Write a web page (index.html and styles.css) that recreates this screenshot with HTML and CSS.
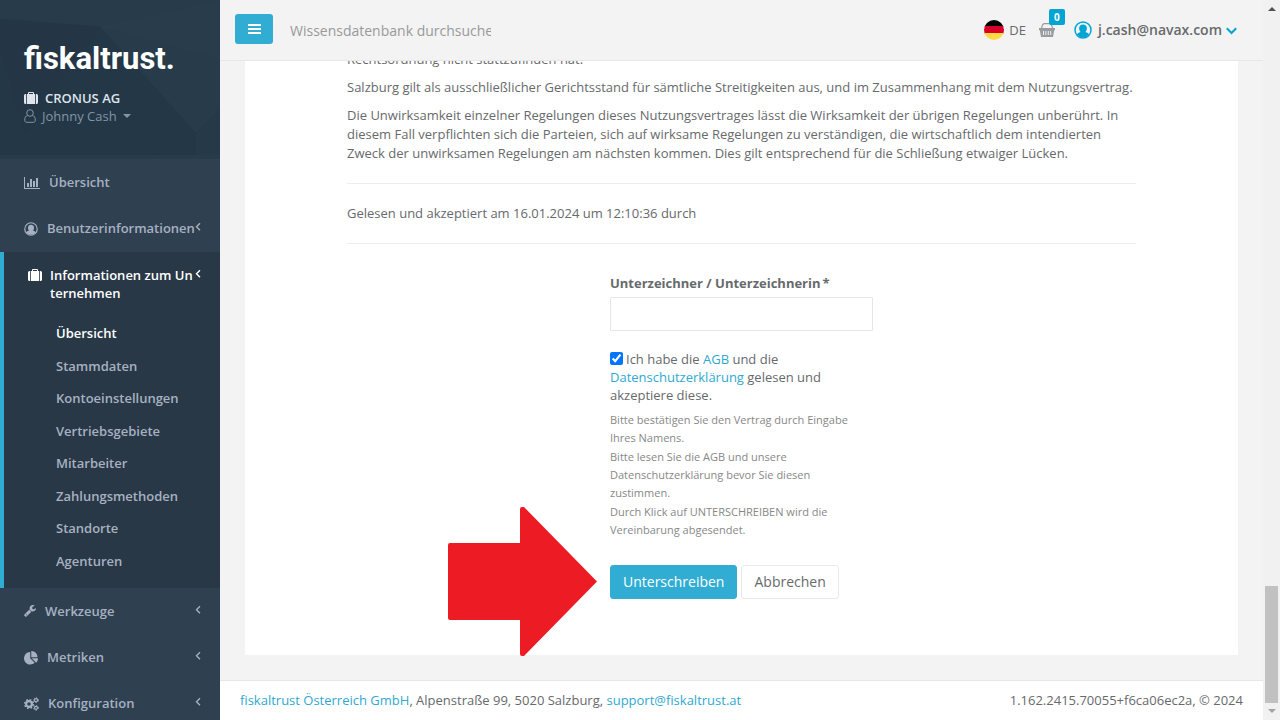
FILE: index.html
```html
<!DOCTYPE html>
<html lang="de">
<head>
<meta charset="utf-8">
<meta name="viewport" content="width=device-width, initial-scale=1">
<title>fiskaltrust.Portal</title>
<link rel="stylesheet" href="styles.css">
</head>
<body>
<svg class="sprite" aria-hidden="true">
  <symbol id="suitcase" viewBox="0 0 14 12"><path d="M2 2v10h-.5Q0 12 0 10.500v-7Q0 2 1.500 2zM12 2v10h.5q1.500 0 1.500-1.500v-7Q14 2 12.500 2z"/><path fill-rule="evenodd" d="M2.800 2H4V1q0-1 1-1h4q1 0 1 1v1h1.200v10H2.800zM5 2h4V1H5z"/></symbol>
  <symbol id="angle" viewBox="0 0 6 10"><path d="M5 1.2 1.5 4.7 5 8.2" fill="none" stroke="currentColor" stroke-width="1.4"/></symbol>
  <symbol id="user-circle" viewBox="0 0 18 18"><circle cx="9" cy="9" r="8" fill="none" stroke="currentColor" stroke-width="1.5"/><path d="M9 3.400c2.300 0 3.900 1.600 3.900 3.900 0 1.500-.6 2.900-1.500 3.700 1.900.4 3.100 1.300 3.700 2.600A8 8 0 0 1 9 16.500a8 8 0 0 1-6.100-2.900c.6-1.300 1.800-2.200 3.700-2.600-.9-.8-1.500-2.200-1.500-3.700 0-2.300 1.600-3.900 3.900-3.900z"/></symbol>
</svg>
<div class="app">
  <aside class="sidebar">
    <div class="brand">
      <svg class="brand-art" viewBox="0 0 220 160" preserveAspectRatio="none" aria-hidden="true">
        <rect width="220" height="160" fill="#243746"/>
        <path d="M0 0h120L100 27 0 19z" fill="#273b4a"/>
        <path d="M120 0h100v110l-24 24L100 27z" fill="#273b4a"/>
        <path d="M100 27 220 0v60z" fill="#283c4b"/>
        <path d="M0 19l100 8-75 107L0 50z" fill="#243645"/>
        <path d="M196 134l24-24v50h-24z" fill="#263948"/>
        <path d="M100 27l96 107-50 26H20z" fill="#243746"/>
        <path d="M0 156h220v4H0z" fill="#283b4a"/>
      </svg>
      <div class="logo">fiskaltrust.</div>
      <div class="company"><svg class="icon case"><use href="#suitcase"/></svg>CRONUS AG</div>
      <button class="account" type="button"><svg class="icon person" viewBox="0 0 12 14"><path d="M3.600 6.300C1.500 7 .7 8.700.7 11.300c0 1.300.8 2 2 2h6.600c1.200 0 2-.7 2-2 0-2.600-.8-4.300-2.900-5" fill="none" stroke="currentColor"/><circle cx="6" cy="4" r="3.300" fill="none" stroke="currentColor"/></svg>Johnny Cash<span class="caret"></span></button>
    </div>
    <nav class="nav">
      <a class="item" href="#"><svg class="icon i16" viewBox="0 0 2048 1792"><path d="M640 896v512h-256v-512h256zM1024 384v1024h-256v-1024h256zM2048 1536v128h-2048v-1536h128v1408h1920zM1408 640v768h-256v-768h256zM1792 256v1152h-256v-1152h256z"/></svg><span>Übersicht</span></a>
      <a class="item" href="#"><svg class="icon i14"><use href="#user-circle"/></svg><span>Benutzerinformationen</span><svg class="angle"><use href="#angle"/></svg></a>
      <div class="active">
        <a class="item" href="#"><svg class="icon case"><use href="#suitcase"/></svg><span class="break">Informationen zum Unternehmen</span><svg class="angle"><use href="#angle"/></svg></a>
        <div class="sub">
          <a class="current" href="#">Übersicht</a>
          <a href="#">Stammdaten</a>
          <a href="#">Kontoeinstellungen</a>
          <a href="#">Vertriebsgebiete</a>
          <a href="#">Mitarbeiter</a>
          <a href="#">Zahlungsmethoden</a>
          <a href="#">Standorte</a>
          <a href="#">Agenturen</a>
        </div>
      </div>
      <a class="item" href="#"><svg class="icon i12" viewBox="64 128 1664 1664"><path d="M448 1472q0-26-19-45t-45-19-45 19-19 45 19 45 45 19 45-19 19-45zm644-420l-682 682q-37 37-90 37-52 0-91-37l-106-108q-38-36-38-90 0-53 38-91l681-681q39 98 114.500 173.500t173.500 114.500zm634-435q0 39-23 106-47 134-164.500 217.500t-258.500 83.500q-185 0-316.500-131.500t-131.500-316.500 131.500-316.500 316.500-131.500q58 0 121.500 16.500t107.500 46.500q16 11 16 28t-16 28l-293 169v224l193 107q5-3 79-48.500t135.500-81 70.500-35.500q15 0 23.500 10t8.500 25z"/></svg><span>Werkzeuge</span><svg class="angle"><use href="#angle"/></svg></a>
      <a class="item" href="#"><svg class="icon i14" viewBox="0 0 1728 1728"><path d="M768 890l546 546q-106 108-247.500 168t-298.500 60q-209 0-385.500-103t-279.500-279.500-103-385.500 103-385.500 279.500-279.500 385.500-103v762zm187 6h773q0 157-60 298.500t-168 247.500zm709-128h-768v-768q209 0 385.500 103t279.500 279.500 103 385.500z"/></svg><span>Metriken</span><svg class="angle"><use href="#angle"/></svg></a>
      <a class="item" href="#"><svg class="icon i15" viewBox="0 0 15 14"><g fill="none" stroke="currentColor"><circle cx="5" cy="7" r="2.900" stroke-width="2.200"/><circle cx="5" cy="7" r="4.400" stroke-width="1.400" stroke-dasharray="1.730 1.730"/><circle cx="12" cy="3.200" r="1.500" stroke-width="1.200"/><circle cx="12" cy="3.200" r="2.400" stroke-width="1" stroke-dasharray="1.260 1.260"/><circle cx="12" cy="10.800" r="1.500" stroke-width="1.200"/><circle cx="12" cy="10.800" r="2.400" stroke-width="1" stroke-dasharray="1.260 1.260"/></g></svg><span>Konfiguration</span><svg class="angle"><use href="#angle"/></svg></a>
    </nav>
  </aside>

  <div class="page">
    <header class="topbar">
      <button class="menu" type="button" aria-label="Menü"><svg viewBox="0 0 13 10"><path d="M0 0h13v2H0zM0 4h13v2H0zM0 8h13v2H0z"/></svg></button>
      <input class="search" type="text" placeholder="Wissensdatenbank durchsuchen" aria-label="Wissensdatenbank durchsuchen">
      <div class="tools">
        <button class="lang" type="button"><svg viewBox="0 0 20 20"><clipPath id="round"><circle cx="10" cy="10" r="10"/></clipPath><g clip-path="url(#round)"><path d="M0 0h20v7H0z" fill="#000"/><path d="M0 6h20v8H0z" fill="#d80027"/><path d="M0 13h20v7H0z" fill="#ffda44"/></g></svg>DE</button>
        <button class="cart" type="button" aria-label="Warenkorb"><svg viewBox="0 0 16 14"><path d="M2.500 5.500C3 2.500 4 .7 5.500.7h5c1.500 0 2.500 1.800 3 4.800" fill="none" stroke="currentColor" stroke-width="1.200"/><path fill-rule="evenodd" d="M0 5h16v2.200h-.8L14 14H2L.8 7.200H0zM4 8v4h1V8zM6.400 8v4h1V8zM8.800 8v4h1V8zM11.200 8v4h1V8z"/></svg><span class="badge">0</span></button>
        <button class="profile" type="button"><svg class="avatar"><use href="#user-circle"/></svg>j.cash@navax.com<svg class="chev" viewBox="0 0 11 8"><path d="M.8 1.300 5.500 6 10.200 1.300" fill="none" stroke="currentColor" stroke-width="2"/></svg></button>
      </div>
    </header>

    <main class="content">
      <section class="card">
        <p>Rechtsordnung nicht stattzufinden hat.</p>
        <p>Salzburg gilt als ausschließlicher Gerichtsstand für sämtliche Streitigkeiten aus, und im Zusammenhang mit dem Nutzungsvertrag.</p>
        <p>Die Unwirksamkeit einzelner Regelungen dieses Nutzungsvertrages lässt die Wirksamkeit der übrigen Regelungen unberührt. In diesem Fall verpflichten sich die Parteien, sich auf wirksame Regelungen zu verständigen, die wirtschaftlich dem intendierten Zweck der unwirksamen Regelungen am nächsten kommen. Dies gilt entsprechend für die Schließung etwaiger Lücken.</p>
        <hr>
        <p>Gelesen und akzeptiert am 16.01.2024 um 12:10:36 durch</p>
        <hr>
        <div class="columns">
          <form class="sign">
            <label class="caption" for="signer">Unterzeichner / Unterzeichnerin<span class="star">*</span></label>
            <input class="field" id="signer" type="text">
            <div class="consent"><input id="agree" type="checkbox" checked><label for="agree">Ich habe die <a href="#">AGB</a> und die <a href="#">Datenschutzerklärung</a> gelesen und akzeptiere diese.</label></div>
            <div class="hints">
              <div>Bitte bestätigen Sie den Vertrag durch Eingabe Ihres Namens.</div>
              <div>Bitte lesen Sie die AGB und unsere Datenschutzerklärung bevor Sie diesen zustimmen.</div>
              <div>Durch Klick auf UNTERSCHREIBEN wird die Vereinbarung abgesendet.</div>
            </div>
            <div class="actions">
              <button class="btn primary" type="button">Unterschreiben</button>
              <button class="btn" type="button">Abbrechen</button>
              <svg class="pointer" viewBox="0 0 149 149" aria-hidden="true"><path d="M2 36h70V2q0-2 2-2h2l73 74.500L76 149h-2q-2 0-2-2v-34H2q-2 0-2-2V38q0-2 2-2z" fill="#ed1c24"/></svg>
            </div>
          </form>
        </div>
      </section>
    </main>

    <footer class="footer">
      <div><a href="#">fiskaltrust Österreich GmbH</a>, Alpenstraße 99, 5020 Salzburg, <a href="#">support@fiskaltrust.at</a></div>
      <div>1.162.2415.70055+f6ca06ec2a, © 2024</div>
    </footer>
  </div>

  <div class="scroll" aria-hidden="true"><span class="up"></span><span class="thumb"></span><span class="down"></span></div>
</div>
</body>
</html>
```
FILE: styles.css
```css
* { box-sizing: border-box; }
body {
  margin: 0;
  font: 13px/18px "Open Sans", "Noto Sans", sans-serif;
  color: #676a6c;
  background: #2f4050;
}
a { color: #2fa9d0; text-decoration: none; }
button { font: inherit; color: inherit; border: 0; padding: 0; background: none; cursor: pointer; }
svg { display: block; flex: none; fill: currentColor; }
.sprite { position: absolute; width: 0; height: 0; }

.app { display: flex; height: 100vh; overflow: hidden; }

/* Sidebar */
.sidebar { flex: none; width: 220px; background: #2f4050; color: #a7b1c2; }
.brand { position: relative; padding: 39px 24px 33px; }
.brand-art { position: absolute; inset: 0; width: 100%; height: 100%; }
.logo { position: relative; font: 700 31px/40px Roboto, sans-serif; color: #fff; margin-bottom: 10px; }
.company, .account { position: relative; display: flex; align-items: center; }
.company { gap: 7px; font-weight: 600; color: #dfe4ed; }
.account { gap: 6px; color: #8095a8; padding-bottom: 1px; }
.person { width: 12px; height: 14px; }
.caret { border: 4px solid transparent; border-top-color: currentColor; border-bottom: 0; }

.case { width: 14px; height: 12px; }
.i12 { width: 12px; height: 12px; }
.i14 { width: 14px; height: 14px; }
.i15 { width: 15px; height: 14px; }
.i16 { width: 16px; height: 14px; }

.nav { font-weight: 600; }
.nav a { color: #a7b1c2; }
.item { display: flex; gap: 9px; padding: 14px 19px 14px 24px; }
.item .icon { margin-top: 3px; }
.item .angle { width: 6px; height: 10px; margin: 3px 0 0 auto; }
.item span { flex: 0 1 auto; margin-right: -9px; }
.item .break { flex: 0 0 144px; word-break: break-all; }
.active .item { gap: 8px; }
.active { border-left: 4px solid #2fadd3; background: #293846; padding-bottom: 11px; margin-top: 1px; }
.nav .active .item, .nav .sub .current { color: #fff; }
.sub { display: grid; grid-auto-rows: 1fr; min-height: 260px; margin-top: 1px; }
.sub a { display: flex; align-items: center; padding-left: 52px; }

/* Page column */
.page { flex: 1; min-width: 0; display: flex; flex-direction: column; background: #f3f3f3; }
.topbar { flex: none; display: flex; align-items: center; padding: 14px 26px 16px 15px; border-bottom: 1px solid #e7e7e7; background: #f3f3f3; }
.menu { display: grid; place-items: center; width: 38px; height: 30px; border-radius: 3px; background: #31add3; color: #fff; }
.menu svg { width: 13px; height: 10px; }
.search { width: 201px; height: 30px; margin-left: 17px; padding: 2px 0 0; border: 0; outline: 0; background: none; font: inherit; font-size: 14px; color: #676a6c; }
.search::placeholder { color: #999; opacity: 1; }
.tools { display: flex; align-items: center; margin-left: auto; padding-top: 2px; }
.lang { display: flex; align-items: center; gap: 5px; }
.lang svg { width: 20px; height: 20px; }
.cart { position: relative; margin-left: 13px; color: #999c9e; }
.cart svg { width: 16px; height: 14px; }
.badge { position: absolute; left: 10px; bottom: 12px; width: 16px; height: 16px; border-radius: 2px; background: #00a5d3; color: #fff; font-size: 10px; font-weight: 700; line-height: 16px; text-align: center; }
.profile { display: flex; align-items: center; margin-left: 19px; font-size: 14px; font-weight: 600; }
.avatar { width: 18px; height: 18px; margin-right: 6px; color: #00a5d3; }
.chev { width: 11px; height: 8px; margin: 2px 0 0 4px; color: #00a5d3; }

.content { flex: 1; min-height: 0; display: flex; flex-direction: column; justify-content: flex-end; overflow: hidden; padding: 0 25px 25px; background: #f3f3f3; }
.card { padding: 20px 102px 56px; background: #fff; }
.card p { margin: 0 0 9px; line-height: 19px; }
.card hr { margin: 20px 0; border: 0; border-top: 1px solid #eee; }
.columns { display: grid; grid-template-columns: 1fr 1fr 1fr; margin-top: 30px; }
.sign { grid-column: 2; }
.caption { display: block; margin-bottom: 5px; font-weight: 700; }
.star { margin-left: 2px; }
.field { display: block; width: 100%; height: 34px; padding: 6px 12px; border: 1px solid #e5e6e7; border-radius: 1px; font: inherit; }
.consent { margin: 19px 0 7px; padding-right: 15px; }
.consent input { width: 13px; height: 13px; margin: 0 3px 0 0; vertical-align: -1px; accent-color: #0075ff; }
.hints { display: grid; gap: 1px; padding-right: 15px; font-size: 11px; color: #888; }
.actions { position: relative; display: flex; gap: 4px; margin-top: 26px; }
.btn { height: 34px; padding: 0 12px; border: 1px solid #e7eaec; border-radius: 3px; background: #fff; font-size: 14px; }
.primary { border-color: #31add3; background: #31add3; color: #fff; }
.pointer { position: absolute; right: calc(100% + 13px); top: -58px; width: 149px; height: 149px; }

.footer { flex: none; display: flex; justify-content: space-between; padding: 10px 20px 11px; border-top: 1px solid #e7e7e7; background: #fff; }

/* Scroll indicator */
.scroll { flex: none; width: 17px; display: flex; flex-direction: column; align-items: center; padding: 7px 0; background: #f1f1f1; }
.up, .down { border: 4px solid transparent; }
.up { border-top: 0; border-bottom-color: #505050; }
.down { border-bottom: 0; border-top-color: #a3a3a3; }
.thumb { width: 13px; height: 117px; margin: auto 0 6px; background: #c1c1c1; }
```
